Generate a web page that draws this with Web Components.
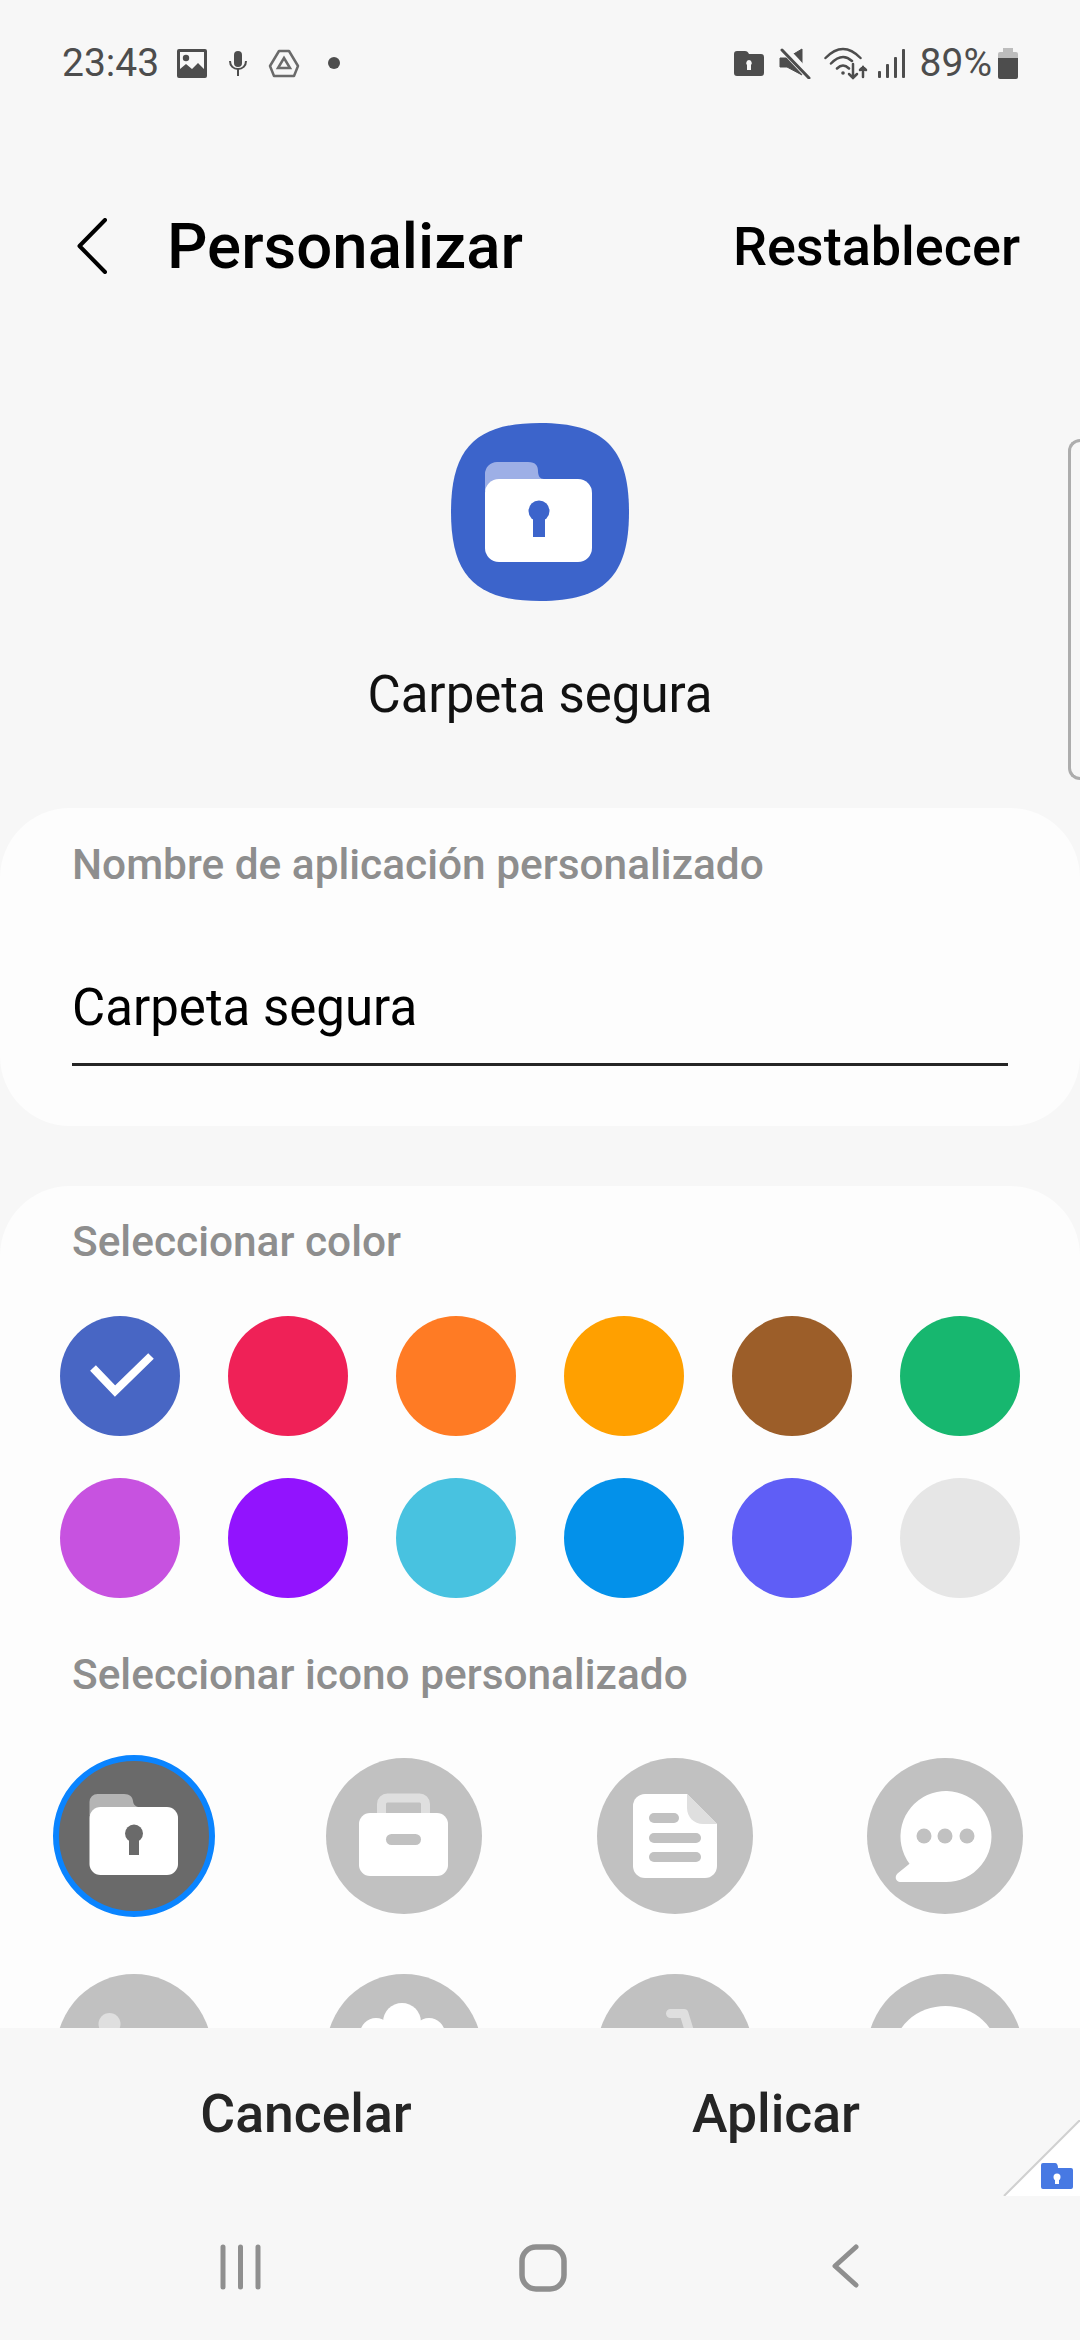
<!DOCTYPE html>
<html>
<head>
<meta charset="utf-8">
<style>
html, body { margin: 0; padding: 0; }
body { width: 1080px; height: 2340px; background: #f7f7f7; font-family: Roboto, sans-serif; overflow: hidden; }
</style>
</head>
<body>
<app-screen>
  <status-bar></status-bar>
  <top-bar title="Personalizar" action="Restablecer"></top-bar>
  <app-preview name="Carpeta segura"></app-preview>
  <scroll-area>
    <name-card label="Nombre de aplicación personalizado" value="Carpeta segura"></name-card>
    <picker-card></picker-card>
  </scroll-area>
  <action-bar left="Cancelar" right="Aplicar"></action-bar>
  <nav-bar></nav-bar>
  <edge-handle></edge-handle>
  <corner-badge></corner-badge>
</app-screen>
<script>
class AppScreen extends HTMLElement {
  constructor() {
    super();
    this.attachShadow({ mode: "open" }).innerHTML = `<style>
      :host { display: flex; flex-direction: column; width: 1080px; height: 2340px; position: relative; overflow: hidden; }
    </style><slot></slot>`;
  }
}

class StatusBar extends HTMLElement {
  constructor() {
    super();
    this.attachShadow({ mode: "open" }).innerHTML = `<style>
      :host { display: flex; align-items: center; justify-content: space-between; height: 62px; margin-top: 32px; padding: 0 62px 0 62px; color: #4d4d4d; font-size: 39px; flex: none; }
      .side { display: flex; align-items: center; }
      svg { display: block; fill: #4d4d4d; }
    </style>
    <div class="side">
      <span>23:43</span>
      <svg style="margin-left:18px" width="30" height="29" viewBox="0 0 30 29"><path fill-rule="evenodd" d="M2 0h26a2 2 0 0 1 2 2v25a2 2 0 0 1-2 2H2a2 2 0 0 1-2-2V2a2 2 0 0 1 2-2zM3 3v17l6-5 6 5 6-6 6 6V3z"/><circle cx="9" cy="9" r="3.200"/></svg>
      <svg style="margin-left:22px" width="18" height="25" viewBox="0 0 18 25"><rect x="5" y="0" width="8" height="16" rx="4"/><path d="M1 10c0 5 3.500 8 8 8s8-3 8-8" fill="none" stroke="#4d4d4d" stroke-width="2"/><rect x="8" y="18" width="2" height="7"/></svg>
      <svg style="margin-left:21px" width="32" height="29" viewBox="0 0 32 29"><path d="M11 2h10l9 15-4 10H6L2 17z" fill="none" stroke="#6a6a6a" stroke-width="2.500" stroke-linejoin="round"/><path d="M16 9l6 10H10z" fill="none" stroke="#6a6a6a" stroke-width="2.500"/></svg>
      <svg style="margin-left:28px" width="12" height="12" viewBox="0 0 12 12"><circle cx="6" cy="6" r="6"/></svg>
    </div>
    <div class="side">
      <svg width="30" height="25" viewBox="0 0 30 25"><path fill-rule="evenodd" d="M3 0h8c2 0 3 1 4 3h12a3 3 0 0 1 3 3v16a3 3 0 0 1-3 3H3a3 3 0 0 1-3-3V3a3 3 0 0 1 3-3zM15 9a3 3 0 0 0-2 5v5h4v-5a3 3 0 0 0-2-5z"/></svg>
      <svg style="margin-left:15px" width="33" height="31" viewBox="0 0 33 31"><path d="M1 10h7L23 1v26L8 19H1z" stroke="#4d4d4d" stroke-width="1" stroke-linejoin="round"/><path d="M4 0l29 31" stroke="#f7f7f7" stroke-width="8"/><path d="M3 2l27 28" stroke="#4d4d4d" stroke-width="3" stroke-linecap="round"/></svg>
      <svg style="margin-left:12px;fill:none" width="44" height="33" viewBox="0 0 44 33" stroke="#4d4d4d" stroke-width="2.500" stroke-linecap="round"><path d="M1.500 11Q19-7 36.500 11M7 16.500Q18 5 28 14M13 21.500Q19 15.500 25 21.500"/><circle cx="19" cy="26" r="1.800" fill="#4d4d4d" stroke="none"/><path d="M29 17v14m-4-4l4 4 4-4M39 30V20m-3 3l3-3 3 3"/></svg>
      <svg style="margin-left:10px" width="27" height="29" viewBox="0 0 27 29"><g fill="#4d4d4d"><rect x="0" y="22" width="3" height="7" rx="1"/><rect x="8" y="15" width="3" height="14" rx="1"/><rect x="16" y="8" width="3" height="21" rx="1"/><rect x="24" y="0" width="3" height="29" rx="1"/></g></svg>
      <span style="margin-left:15px">89%</span>
      <svg style="margin-left:6px" width="20" height="31" viewBox="0 0 20 31"><path fill="#bdbdbd" d="M5 0h10v4h3a2 2 0 0 1 2 2v4H0V6a2 2 0 0 1 2-2h3z"/><path d="M0 10h20v19a2 2 0 0 1-2 2H2a2 2 0 0 1-2-2z"/></svg>
    </div>`;
  }
}

class TopBar extends HTMLElement {
  constructor() {
    super();
    this.attachShadow({ mode: "open" }).innerHTML = `<style>
      :host { display: flex; align-items: center; height: 90px; margin-top: 107px; padding: 0 60px 0 77px; flex: none; color: #000; }
      svg { display: block; flex: none; }
      h1 { margin: 0 0 0 60px; font-size: 63.500px; font-weight: 500; flex: 1; }
      span { font-size: 54px; font-weight: 500; }
    </style>
    <svg width="30" height="56" viewBox="0 0 30 56"><path d="M28 2L2.500 28 28 54" fill="none" stroke="#000" stroke-width="4" stroke-linecap="round" stroke-linejoin="round"/></svg>
    <h1>${this.getAttribute("title")}</h1>
    <span>${this.getAttribute("action")}</span>`;
  }
}

class AppPreview extends HTMLElement {
  constructor() {
    super();
    this.attachShadow({ mode: "open" }).innerHTML = `<style>
      :host { display: flex; flex-direction: column; align-items: center; flex: none; margin-top: 132px; }
      svg { display: block; }
      div { margin-top: 64px; font-size: 51px; color: #111; line-height: 60px; }
    </style>
    <svg width="178" height="178" viewBox="0 0 178 178">
      <path fill="#3c64cb" d="M89 0C153 0 178 25 178 89 178 153 153 178 89 178 25 178 0 153 0 89 0 25 25 0 89 0z"/>
      <path fill="#9dafe6" d="M34 51a12 12 0 0 1 12-12h31c8 0 10 4 10 9 0 5 2 8 6 8v12H34z"/>
      <rect x="34" y="56" width="107" height="83" rx="14" fill="#fff"/>
      <circle cx="88" cy="88" r="10.500" fill="#3c64cb"/>
      <rect x="82" y="90" width="12" height="24" fill="#3c64cb"/>
    </svg>
    <div>${this.getAttribute("name")}</div>`;
  }
}

class ScrollArea extends HTMLElement {
  constructor() {
    super();
    this.attachShadow({ mode: "open" }).innerHTML = `<style>
      :host { display: flex; flex-direction: column; gap: 60px; flex: 1; min-height: 0; overflow: hidden; margin-top: 83px; }
    </style><slot></slot>`;
  }
}

class NameCard extends HTMLElement {
  constructor() {
    super();
    this.attachShadow({ mode: "open" }).innerHTML = `<style>
      :host { display: block; height: 318px; flex: none; box-sizing: border-box; background: #fdfdfd; border-radius: 70px; padding: 0 72px; }
      .lab { padding-top: 35px; font-size: 42.400px; font-weight: 500; color: #8e8e8e; line-height: 44px; }
      .val { margin-top: 91px; font-size: 51px; color: #000; line-height: 60px; height: 85px; border-bottom: 3px solid #252525; }
    </style>
    <div class="lab">${this.getAttribute("label")}</div>
    <div class="val">${this.getAttribute("value")}</div>`;
  }
}

class ColorDot extends HTMLElement {
  constructor() {
    super();
    const checked = this.hasAttribute("checked");
    this.attachShadow({ mode: "open" }).innerHTML = `<style>
      :host { display: block; width: 120px; height: 120px; border-radius: 50%; background: ${this.getAttribute("color")}; }
      svg { display: block; }
    </style>${checked ? `<svg width="120" height="120" viewBox="0 0 120 120"><path d="M33 52l22 23 36-35" fill="none" stroke="#fff" stroke-width="8"/></svg>` : ""}`;
  }
}

const glyphs = {
  folder: (fg, tab) => `<path fill="${tab}" d="M33.500 44a8 8 0 0 1 8-8H68c6 0 8.500 3 9 7 .5 4 3 6 7 6v8H33.500z"/><rect x="33.500" y="49" width="88.500" height="68" rx="11" fill="#fff"/><circle cx="78" cy="75.500" r="9" fill="${fg}"/><rect x="73" y="78" width="10" height="19" fill="${fg}"/>`,
  case: () => `<path fill="none" stroke="#dfdfdf" stroke-width="9" d="M55.500 60V46a6 6 0 0 1 6-6h32a6 6 0 0 1 6 6v14"/><rect x="33" y="55" width="89" height="63" rx="11" fill="#fff"/><rect x="60" y="76" width="35" height="11" rx="5.500" fill="#c1c1c1"/>`,
  note: () => `<path fill="#fff" d="M48 36h42l30 30v42a12 12 0 0 1-12 12H48a12 12 0 0 1-12-12V48a12 12 0 0 1 12-12z"/><path fill="#dfdfdf" d="M90 36l30 30h-14c-9 0-16-7-16-16z"/><g fill="#c1c1c1"><rect x="52" y="55" width="30" height="10" rx="5"/><rect x="52" y="75" width="52" height="10" rx="5"/><rect x="52" y="94" width="52" height="10" rx="5"/></g>`,
  chat: () => `<path fill="#fff" d="M42.500 105.700A45.500 45.500 0 1 1 78.500 124H34c-5 0-7-5-3.500-8.500z"/><g fill="#c1c1c1"><circle cx="57" cy="78" r="7.500"/><circle cx="78" cy="78" r="7.500"/><circle cx="100" cy="78" r="7.500"/></g>`,
  photo: () => `<circle cx="53.500" cy="50" r="11" fill="#dfdfdf"/>`,
  cloud: () => `<g fill="#fff"><circle cx="76" cy="48" r="19"/><circle cx="50" cy="60" r="16"/><circle cx="103" cy="60" r="16"/></g>`,
  cart: () => `<path fill="none" stroke="#dfdfdf" stroke-width="9" stroke-linecap="round" stroke-linejoin="round" d="M73.500 39.500H87L97 72"/><rect x="39" y="54" width="21" height="16" rx="8" fill="#dfdfdf"/>`,
  ring: () => `<ellipse cx="78.500" cy="79" rx="52" ry="47" fill="#fff"/>`
};

class IconTile extends HTMLElement {
  constructor() {
    super();
    const kind = this.getAttribute("kind");
    const selected = this.hasAttribute("selected");
    const bg = selected ? "#6a6a6a" : "#c1c1c1";
    const ring = selected ? `<circle cx="78" cy="78" r="78" fill="none" stroke="#0a84ff" stroke-width="6"/>` : "";
    this.attachShadow({ mode: "open" }).innerHTML = `<style>
      :host { display: block; width: 156px; height: 156px; }
      svg { display: block; overflow: visible; }
    </style>
    <svg width="156" height="156" viewBox="0 0 156 156">
      <circle cx="78" cy="78" r="78" fill="${bg}"/>
      ${glyphs[kind](bg, selected ? "#b4b4b4" : "#dfdfdf")}
      ${ring}
    </svg>`;
  }
}

class PickerCard extends HTMLElement {
  constructor() {
    super();
    const colors = ["#4866c4", "#ef2157", "#ff7b24", "#ffa000", "#9c5e29", "#17b76f", "#c752e0", "#9213fe", "#48c2e0", "#0391ea", "#5f5ef6", "#e6e6e6"];
    const kinds = ["folder", "case", "note", "chat", "photo", "cloud", "cart", "ring"];
    const dots = colors.map((c, i) => `<color-dot color="${c}"${i === 0 ? " checked" : ""}></color-dot>`).join("");
    const tiles = kinds.map((k, i) => `<icon-tile kind="${k}"${i === 0 ? " selected" : ""}></icon-tile>`).join("");
    this.attachShadow({ mode: "open" }).innerHTML = `<style>
      :host { display: block; flex: none; background: #fdfdfd; border-radius: 70px 70px 0 0; padding-top: 34px; height: 1100px; box-sizing: border-box; }
      .lab { padding-left: 72px; font-size: 42.400px; font-weight: 500; color: #8e8e8e; line-height: 44px; }
      .colors { display: grid; grid-template-columns: repeat(6, 120px); justify-content: space-between; row-gap: 42px; margin: 52px 60px 0; }
      .icons { display: grid; grid-template-columns: repeat(4, 156px); justify-content: space-between; row-gap: 60px; margin: 61px 57px 0 56px; }
      .second { margin-top: 55px; }
    </style>
    <div class="lab">Seleccionar color</div>
    <div class="colors">${dots}</div>
    <div class="lab second">Seleccionar icono personalizado</div>
    <div class="icons">${tiles}</div>`;
  }
}

class ActionBar extends HTMLElement {
  constructor() {
    super();
    this.attachShadow({ mode: "open" }).innerHTML = `<style>
      :host { display: block; flex: none; height: 170px; background: #f7f7f7; }
      .row { display: flex; height: 100%; align-items: center; font-size: 53.500px; font-weight: 500; color: #252525; }
      .a { width: 612px; text-align: center; }
      .b { width: 328px; text-align: center; }
    </style>
    <div class="row"><div class="a">${this.getAttribute("left")}</div><div class="b">${this.getAttribute("right")}</div></div>`;
  }
}

class NavBar extends HTMLElement {
  constructor() {
    super();
    this.attachShadow({ mode: "open" }).innerHTML = `<style>
      :host { display: flex; flex: none; height: 142px; background: #f7f7f7; align-items: flex-start; padding: 46px 0 0 219px; box-sizing: border-box; }
      svg { display: block; flex: none; }
      .home { margin-left: 257px; }
      .back { margin-left: 265px; }
    </style>
    <svg width="43" height="46" viewBox="0 0 43 46"><path d="M4 3v40M21.500 3v40M39 3v40" stroke="#8f8f8f" stroke-width="5" stroke-linecap="round"/></svg>
    <svg class="home" width="48" height="48" viewBox="0 0 48 48"><rect x="3" y="3" width="42" height="42" rx="14" fill="none" stroke="#8f8f8f" stroke-width="5.500"/></svg>
    <svg class="back" width="27" height="44" viewBox="0 0 27 44"><path d="M24 3L3 22l21 19" fill="none" stroke="#8f8f8f" stroke-width="5" stroke-linecap="round" stroke-linejoin="round"/></svg>`;
  }
}

class EdgeHandle extends HTMLElement {
  constructor() {
    super();
    this.attachShadow({ mode: "open" }).innerHTML = `<style>
      :host { display: block; position: absolute; left: 1068px; top: 439px; width: 12px; height: 341px; box-sizing: border-box; border: 3px solid #adadad; border-right: none; border-radius: 12px 0 0 12px; }
    </style>`;
  }
}

class CornerBadge extends HTMLElement {
  constructor() {
    super();
    this.attachShadow({ mode: "open" }).innerHTML = `<style>
      :host { display: block; position: absolute; left: 1003px; top: 2120px; width: 77px; height: 76px; }
      svg { display: block; }
    </style>
    <svg width="77" height="76" viewBox="0 0 77 76">
      <path d="M1 76L77 0v76z" fill="#fff"/>
      <path d="M1 76L77 0" stroke="#d0d0d0" stroke-width="2"/>
      <path fill="#4779e3" d="M40 43h12c2 0 3 2 3 5h13a2 2 0 0 1 2 2v17a2 2 0 0 1-2 2H40a2 2 0 0 1-2-2V45a2 2 0 0 1 2-2z"/>
      <circle cx="54" cy="57" r="3.500" fill="#fff"/><rect x="52" y="58" width="4" height="6" fill="#fff"/>
    </svg>`;
  }
}

customElements.define("app-screen", AppScreen);
customElements.define("status-bar", StatusBar);
customElements.define("top-bar", TopBar);
customElements.define("app-preview", AppPreview);
customElements.define("scroll-area", ScrollArea);
customElements.define("name-card", NameCard);
customElements.define("color-dot", ColorDot);
customElements.define("icon-tile", IconTile);
customElements.define("picker-card", PickerCard);
customElements.define("action-bar", ActionBar);
customElements.define("nav-bar", NavBar);
customElements.define("edge-handle", EdgeHandle);
customElements.define("corner-badge", CornerBadge);
</script>
</body>
</html>
